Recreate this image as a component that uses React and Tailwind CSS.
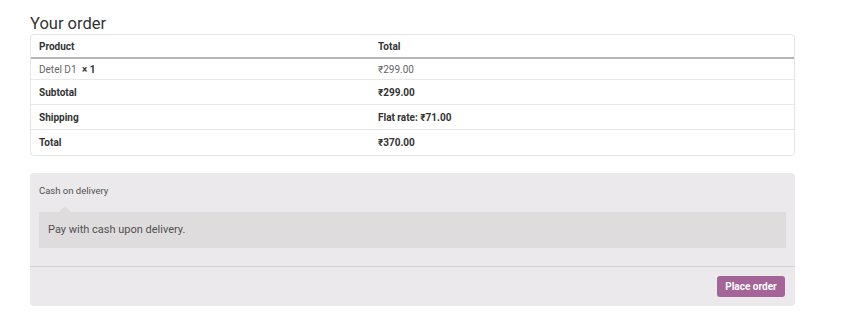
export default function App() {
  const rows = [
    { label: 'Subtotal', value: '₹299.00' },
    { label: 'Shipping', value: 'Flat rate: ₹71.00' },
    { label: 'Total', value: '₹370.00' },
  ]

  return (
    <div className="w-[850px] h-[324px] bg-white pl-[30px] pr-[55px] pt-[14px]" style={{ fontFamily: 'Roboto, "Liberation Sans", sans-serif' }}>
      <h3 className="text-[16.5px] leading-[20px] text-[#333] font-normal">Your order</h3>

      <div className="border border-[#e4e4e4] rounded-[4px] text-[10px] text-[#333]">
        <div className="flex h-[24px] items-center border-b-2 border-[#b5b5b5] font-bold">
          <div className="w-[347px] pl-[8px]">Product</div>
          <div>Total</div>
        </div>
        <div className="flex h-[21px] items-center border-b border-[#e8e8e8] text-[#666]">
          <div className="w-[347px] pl-[8px]">
            Detel D1 <span className="font-bold text-[#333] ml-[3px]">× 1</span>
          </div>
          <div>₹299.00</div>
        </div>
        {rows.map((r, i) => (
          <div
            key={r.label}
            className={'flex h-[25px] items-center font-bold ' + (i < rows.length - 1 ? 'border-b border-[#e8e8e8]' : '')}
          >
            <div className="w-[347px] pl-[8px]">{r.label}</div>
            <div>{r.value}</div>
          </div>
        ))}
      </div>

      <div className="mt-[17px] bg-[#ebe9eb] rounded-[4px] h-[133px] flex flex-col">
        <div className="px-[9px] pt-[11px] pb-[18px] border-b border-[#d3ced2]">
          <div className="text-[9.5px] leading-[14px] text-[#515151]">Cash on delivery</div>
          <div className="relative mt-[14px] bg-[#dfdcde] h-[36px] flex items-center px-[9px] text-[11px] text-[#515151]">
            <span className="absolute left-[20px] -top-[6px] w-0 h-0 border-l-[6px] border-r-[6px] border-b-[6px] border-l-transparent border-r-transparent border-b-[#dfdcde]" />
            Pay with cash upon delivery.
          </div>
        </div>
        <div className="flex-1 flex items-center justify-end px-[10px]">
          <button className="bg-[#a46497] text-white font-bold text-[10px] w-[68px] h-[21px] rounded-[3px]">
            Place order
          </button>
        </div>
      </div>
    </div>
  )
}
